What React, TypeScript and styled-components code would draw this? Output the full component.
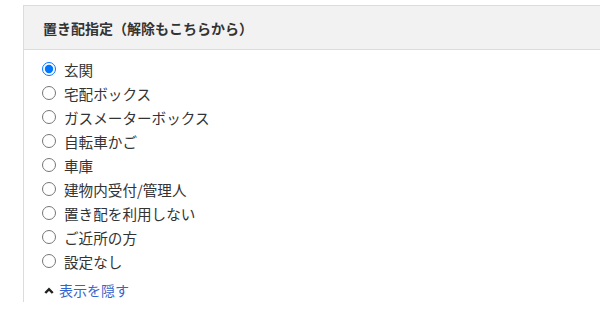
import React, { useState } from "react";
import styled, { createGlobalStyle } from "styled-components";

const Global = createGlobalStyle`
  html, body { margin: 0; padding: 0; background: #fff; }
  body { font-family: "Noto Sans CJK JP", "Noto Sans", sans-serif; color: #333; }
`;

const Panel = styled.section`
  margin: 5px 0 0 23px;
  border-left: 1px solid #dcdcdc;
  border-top: 1px solid #dcdcdc;
`;

const Header = styled.div`
  height: 43px;
  background: #f2f2f2;
  border-bottom: 1px solid #dcdcdc;
  display: flex;
  align-items: center;
  padding-left: 19px;
  font-size: 14px;
  font-weight: bold;
  color: #333;
`;

const Body = styled.div`
  padding: 7px 0 0 18px;
  display: flex;
  flex-direction: column;
`;

const Row = styled.label`
  height: 24px;
  display: flex;
  align-items: center;
  font-size: 14.6px;
  color: #333;
  cursor: pointer;
`;

const Radio = styled.input`
  width: 14px;
  height: 14px;
  margin: 0 8px 0 0;
`;

const Toggle = styled.a`
  margin-top: 5px;
  height: 24px;
  display: flex;
  align-items: center;
  font-size: 14px;
  color: #3366cc;
  text-decoration: none;
  cursor: pointer;
`;

const Caret = styled.svg`
  width: 10px;
  height: 7px;
  margin: 0 5px 0 2px;
`;

const options = [
  "玄関",
  "宅配ボックス",
  "ガスメーターボックス",
  "自転車かご",
  "車庫",
  "建物内受付/管理人",
  "置き配を利用しない",
  "ご近所の方",
  "設定なし",
];

export default function App() {
  const [value, setValue] = useState("玄関");
  return (
    <>
      <Global />
      <Panel>
        <Header>置き配指定（解除もこちらから）</Header>
        <Body>
          {options.map((o) => (
            <Row key={o}>
              <Radio
                type="radio"
                name="okihai"
                checked={value === o}
                onChange={() => setValue(o)}
              />
              {o}
            </Row>
          ))}
          <Toggle>
            <Caret viewBox="0 0 10 7">
              <path d="M1.3 6 L5 2.2 L8.7 6" fill="none" stroke="#222" strokeWidth="2.5" />
            </Caret>
            表示を隠す
          </Toggle>
        </Body>
      </Panel>
    </>
  );
}
